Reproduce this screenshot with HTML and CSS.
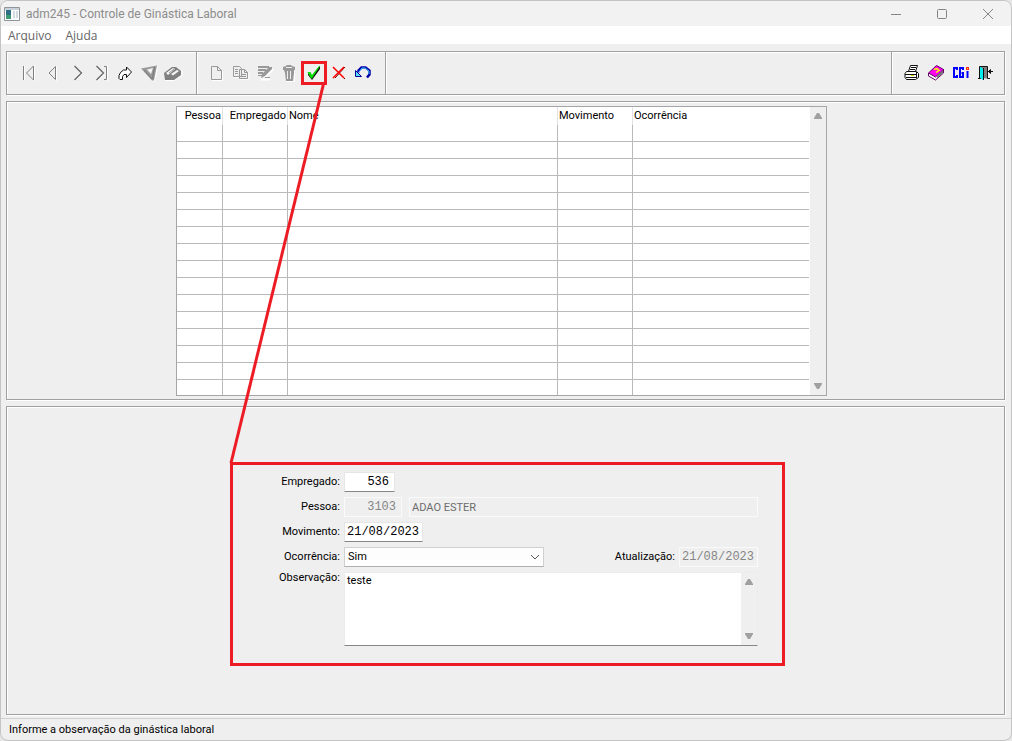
FILE: index.html
```html
<!DOCTYPE html>
<html lang="pt-BR">
<head>
<meta charset="utf-8">
<title>adm245 - Controle de Ginástica Laboral</title>
<link rel="stylesheet" href="styles.css">
</head>
<body>
<div class="window">
  <header class="titlebar">
    <svg class="app-icon" width="16" height="14" viewBox="0 0 16 14"><path d="M.5.5h15v13H.5z" fill="#fff" stroke="#8e959b"/><path d="M1 1h14v2H1z" fill="#c9d2da"/><path d="M2 3h5v9H2z" fill="#2f6f86"/><path d="M2 8h5v4H2z" fill="#3c9a70"/><path d="M9 4h2v7H9zM12 4h2v7h-2z" fill="#d5dbe0"/></svg>
    <h1 class="title">adm245 - Controle de Ginástica Laboral</h1>
    <div class="window-buttons">
      <button type="button" aria-label="Minimizar"><svg width="12" height="12"><path d="M1 6.5h10" stroke="#858585"/></svg></button>
      <button type="button" aria-label="Maximizar"><svg width="12" height="12"><rect x="1.5" y="1.5" width="9" height="9" rx="1" fill="none" stroke="#858585"/></svg></button>
      <button type="button" aria-label="Fechar"><svg width="12" height="12"><path d="M1 1l10 10M11 1L1 11" stroke="#858585"/></svg></button>
    </div>
  </header>
  <nav class="menu"><a href="#">Arquivo</a><a href="#">Ajuda</a></nav>

  <main class="content">
    <div class="toolbar">
      <div class="tools tools-nav">
        <button type="button" aria-label="Primeiro"><svg width="18" height="18"><path d="M4.5 16V2M14.500 1.500v15L7 9.500" stroke="#fff" fill="none"/><path d="M3.500 2v14M13.500 2v14M13.500 2L6.500 9l7 7" stroke="#808080" fill="none"/></svg></button>
        <button type="button" aria-label="Anterior"><svg width="18" height="18"><path d="M12.500 2v14.500L6 10.500" stroke="#fff" fill="none"/><path d="M11.500 2.500v13M11.500 2.500L5 9l6.500 6.500" stroke="#808080" fill="none"/></svg></button>
        <button type="button" aria-label="Próximo"><svg width="18" height="18"><path d="M6.500 17.500l8-8" stroke="#fff" fill="none"/><path d="M6.500 2l7 7-7 7" stroke="#666" stroke-width="1.300" fill="none"/></svg></button>
        <button type="button" aria-label="Último"><svg width="18" height="18"><path d="M5 17.500l8-8M15.500 2v15" stroke="#fff" fill="none"/><path d="M4.500 2l7 7-7 7" stroke="#666" stroke-width="1.300" fill="none"/><path d="M12 2.500h2.500v13H12" stroke="#808080" fill="none"/></svg></button>
        <button type="button" aria-label="Ir para"><svg width="18" height="18"><path d="M4 15.500H6.500V12.500L8 10.500h2.500V13.500L15.500 8 10.500 3v3H7.500L4.500 8.500 3 11.500v3z" fill="#fff" stroke="#111"/></svg></button>
        <button type="button" aria-label="Filtrar"><svg width="18" height="18"><path d="M3 6.500l15-4-3 15h-2z" fill="#fff"/><path d="M1 4.500l16-3-3 15h-2z" fill="#999"/><path d="M7 5.500l6-1.500-2 6z" fill="#f4f4f4"/><path d="M4 6l8 9M14.500 3l-2 12" stroke="#777" fill="none"/></svg></button>
        <button type="button" aria-label="Pesquisar"><svg width="20" height="18"><path d="M2 16.500h9l8-5V6" stroke="#fff" fill="none"/><path d="M1 9l8-6h4l5 4v4l-7 5H2z" fill="#808080"/><path d="M3 9l7-5 2 1-7 6zM8 10l6-4 2 1-6 4.500z" fill="#f5f5f5"/><path d="M6 9l5-4" stroke="#999"/></svg></button>
      </div>
      <div class="tools tools-edit">
        <button type="button" aria-label="Novo"><svg width="18" height="18"><path d="M4 16.500h10.500V6" stroke="#fff" fill="none"/><path d="M3.500 2.500h6l4 4v9h-10zM9.500 2.500v4h4" stroke="#999" fill="none"/></svg></button>
        <button type="button" aria-label="Copiar"><svg width="18" height="18"><path d="M2.500 13.500h5M8 15.500h9V8" stroke="#fff" fill="none"/><path d="M1.500 2.500h6l2 2v8h-8zM7.500 5.500h5l3 3v6h-8zM12.500 5.500v3h3M3 5.500h3M3 7.500h3M3 9.500h3M9 10.500h5M9 12.500h5" stroke="#999" fill="none"/></svg></button>
        <button type="button" aria-label="Editar"><svg width="18" height="18"><path d="M5 15.500h9M9 13l8-8" stroke="#fff" stroke-width="2" fill="none"/><path d="M2 2h11v2H2zM2 5h8v2H2zM2 8h5v2H2zM2 11h4v1H2zM9 13h5v1H9zM6 10l7-7h3v2l-7 7-4 2z" fill="#999"/></svg></button>
        <button type="button" aria-label="Excluir"><svg width="18" height="18"><path d="M6 17.500h8.500V7" stroke="#fff" fill="none"/><path d="M3 3l3-1 1-1h4l1 1 3 1v3H3zM4 6h10v3l-1 8H6L5 9z" fill="#999"/><path d="M6 3.500h6M7.500 7v8M10.500 7v8" stroke="#eee"/></svg></button>
        <button type="button" class="confirm" aria-label="Confirmar"><svg width="18" height="18"><path d="M3 9l4 3 8-10v3L7 16 3 11z" fill="#111"/><path d="M2.500 8h3L7 11l7-9h1L7 14.500H6z" fill="#0d0"/></svg></button>
        <button type="button" class="cancel" aria-label="Cancelar"><svg width="18" height="18"><path d="M4 4l11 11M15 3L5 14" stroke="#700"/><path d="M3 3l11 11M14 3L3 14" stroke="#f00" stroke-width="1.500"/></svg></button>
        <button type="button" aria-label="Desfazer"><svg width="18" height="18"><path d="M4.500 8.500V6.500l3-3h4l4 3v4l-2.500 3" stroke="#00a" stroke-width="2.500" fill="none"/><path d="M5 8l3-4h3l4 3v3" stroke="#4cf" fill="none"/><path d="M1.500 6.500v6h6z" fill="#5df" stroke="#009"/></svg></button>
      </div>
      <div class="tools-space"></div>
      <div class="tools tools-app">
        <button type="button" aria-label="Imprimir"><svg width="18" height="18"><path d="M5.500 7.500l2-6h7l-2 6M3.500 7.500h10l2 2v4l-3 2h-9l-1.500-2v-4z" fill="#fff" stroke="#111"/><path d="M8 3.500h5M7 5.500h5M2 10.500h11M3 13.500h10M13.500 8v6" stroke="#111"/><path d="M8 11h3v1H8z" fill="#dd0"/></svg></button>
        <button type="button" aria-label="Ajuda"><svg width="18" height="18"><path d="M1.500 9v3l7 4 8-7V5" fill="#fff" stroke="#606"/><path d="M1.500 9l8-7.500 7 4-8 7.500z" fill="#f0e" stroke="#606"/><path d="M7 5.500l3-1 2 2-3 2" stroke="#ff0" stroke-width="1.500" fill="none"/><path d="M12 10l4-4v3l-6 5v-3z" fill="#777"/></svg></button>
        <button type="button" class="cgi" aria-label="CGI"><svg width="18" height="18"><path d="M5 6V4H2v9h3v-2M11 6V4H8v9h3V9H9.500M15.500 7v7" fill="none" stroke="#00f" stroke-width="2"/><path d="M14 3h3v3h-3z" fill="#f22"/><path d="M15 4h1v1h-1z" fill="#ff0"/></svg></button>
        <button type="button" aria-label="Sair"><svg width="18" height="18"><path d="M1 14.500h3M2.500 14V2.500h8V14.500H13" fill="#808080" stroke="#111"/><path d="M3 3h1l2 2v11l-3-2z" fill="#0ee"/><path d="M6.500 4v12" stroke="#111"/><path d="M11 7.500h5M13.500 5.500l-2 2 2 2z" stroke="#111" fill="#111"/></svg></button>
      </div>
    </div>

    <section class="panel panel-grid">
      <div class="grid-box">
        <table class="grid">
          <colgroup><col class="c-pessoa"><col class="c-empregado"><col class="c-nome"><col class="c-movimento"><col class="c-ocorrencia"></colgroup>
          <thead><tr><th class="num">Pessoa</th><th class="num">Empregado</th><th>Nome</th><th>Movimento</th><th>Ocorrência</th></tr></thead>
          <tbody>
            <tr><td></td><td></td><td></td><td></td><td></td></tr>
            <tr><td></td><td></td><td></td><td></td><td></td></tr>
            <tr><td></td><td></td><td></td><td></td><td></td></tr>
            <tr><td></td><td></td><td></td><td></td><td></td></tr>
            <tr><td></td><td></td><td></td><td></td><td></td></tr>
            <tr><td></td><td></td><td></td><td></td><td></td></tr>
            <tr><td></td><td></td><td></td><td></td><td></td></tr>
            <tr><td></td><td></td><td></td><td></td><td></td></tr>
            <tr><td></td><td></td><td></td><td></td><td></td></tr>
            <tr><td></td><td></td><td></td><td></td><td></td></tr>
            <tr><td></td><td></td><td></td><td></td><td></td></tr>
            <tr><td></td><td></td><td></td><td></td><td></td></tr>
            <tr><td></td><td></td><td></td><td></td><td></td></tr>
            <tr><td></td><td></td><td></td><td></td><td></td></tr>
            <tr><td></td><td></td><td></td><td></td><td></td></tr>
            <tr><td></td><td></td><td></td><td></td><td></td></tr>
          </tbody>
        </table>
        <div class="scroll">
          <svg width="10" height="8"><path d="M4 1h2l3 5v1H1V6z" fill="#a0a0a0"/></svg>
          <svg width="10" height="8"><path d="M4 7h2l3-5V1H1v1z" fill="#a0a0a0"/></svg>
        </div>
      </div>
    </section>

    <section class="panel panel-form">
      <form class="form">
        <label for="empregado">Empregado:</label>
        <div class="line"><input id="empregado" class="field mono w-code" value="536"></div>
        <label for="pessoa">Pessoa:</label>
        <div class="line split"><input id="pessoa" class="field mono off w-person" value="3103" readonly><input class="field off grow" aria-label="Nome" value="ADAO ESTER" readonly></div>
        <label for="movimento">Movimento:</label>
        <div class="line"><input id="movimento" class="field mono w-date" value="21/08/2023"></div>
        <label for="ocorrencia">Ocorrência:</label>
        <div class="line between">
          <span class="pick"><select id="ocorrencia"><option>Sim</option><option>Não</option></select><svg class="chevron" width="10" height="6"><path d="M1 1l4 4 4-4" fill="none" stroke="#555"/></svg></span>
          <span class="update"><label for="atualizacao">Atualização:</label><input id="atualizacao" class="field mono off w-date" value="21/08/2023" readonly></span>
        </div>
        <label for="observacao" class="top">Observação:</label>
        <div class="memo">
          <textarea id="observacao">teste</textarea>
          <div class="scroll">
            <svg width="10" height="8"><path d="M4 1h2l3 5v1H1V6z" fill="#a0a0a0"/></svg>
            <svg width="10" height="8"><path d="M4 7h2l3-5V1H1v1z" fill="#a0a0a0"/></svg>
          </div>
        </div>
      </form>
    </section>
  </main>
  <footer class="status">Informe a observação da ginástica laboral</footer>
  <svg class="callout" width="340" height="480"><path d="M323.500 84L231 463" stroke="#ed1c24" stroke-width="3" fill="none"/></svg>
</div>
</body>
</html>
```
FILE: styles.css
```css
* { box-sizing: border-box; }
body {
  margin: 0;
  background: #e6e6e6;
  color: #000;
  font: 11px/16px Roboto, "Liberation Sans", sans-serif;
}
button { padding: 0; border: 0; background: none; }
svg { display: block; }
input, select, textarea { margin: 0; font: inherit; color: inherit; outline: 0; }

.window {
  position: relative;
  display: flex;
  flex-direction: column;
  min-height: 100vh;
  overflow: hidden;
  border: 1px solid #c4c4c4;
  border-radius: 8px;
  background: #efefef;
}
.titlebar {
  display: flex;
  align-items: center;
  height: 25px;
  padding-left: 3px;
  background: #f2f2f2;
}
.title {
  flex: 1;
  margin: 0 0 0 6px;
  color: #8c8c8c;
  font: 12px/16px Roboto, sans-serif;
}
.window-buttons { display: flex; }
.window-buttons button { display: grid; place-items: center; width: 46px; height: 24px; }
.menu {
  display: flex;
  gap: 14px;
  height: 18px;
  padding-left: 7px;
  background: #fff;
  font: 12px/20px "Open Sans", sans-serif;
}
.menu a { color: #666; text-decoration: none; }

.content {
  flex: 1;
  display: flex;
  flex-direction: column;
  gap: 6px;
  padding: 7px 6px 3px 5px;
}
.toolbar, .panel {
  border: 1px solid #a0a0a0;
  box-shadow: 1px 1px 0 #fff, inset 1px 1px 0 #fff;
}
.toolbar { display: flex; height: 44px; }
.tools { display: flex; align-items: center; }
.tools button { display: grid; place-items: center; width: 24px; height: 24px; }
.tools-nav { padding: 0 11px 0 10px; }
.tools-edit { padding: 0 10px 0 8px; }
.tools-app { padding: 0 6px 0 8px; }
.tools-edit, .tools-space, .tools-app { border-left: 1px solid #a0a0a0; box-shadow: inset 1px 1px 0 #fff; }
.tools-space { flex: 1; }
.tools .confirm { width: 26px; border: 3px solid #ed1c24; }
.tools-app .cgi { width: 26px; }

.panel-grid { padding: 4px 0 3px 169px; }
.grid-box { display: flex; width: 651px; border: 1px solid #a6a6aa; background: #fff; }
.grid { width: 632px; border-collapse: separate; border-spacing: 0; table-layout: fixed; }
.c-pessoa { width: 46px; }
.c-empregado { width: 65px; }
.c-nome { width: 270px; }
.c-movimento { width: 75px; }
.grid th {
  height: 18px;
  padding: 0 1px;
  border-right: 1px solid #e2e2e2;
  font-weight: 400;
  text-align: left;
  line-height: 18px;
}
.grid th.num { text-align: right; }
.grid td { height: 17px; padding: 0; border: solid #b9b9b9; border-width: 0 1px 1px 0; }
.grid th:last-child, .grid td:last-child { border-right: 0; }
.grid tr:last-child td { height: 15px; border-bottom: 0; }
.scroll {
  display: flex;
  flex-direction: column;
  align-items: center;
  justify-content: space-between;
  width: 16px;
  margin-left: auto;
  padding: 5px 0;
  background: #efefef;
}

.panel-form { flex: 1; padding: 55px 0 48px 223px; }
.form {
  display: grid;
  grid-template-columns: 107px 414px;
  grid-auto-rows: minmax(20px, auto);
  gap: 5px 4px;
  width: 555px;
  padding: 7px 0 17px;
  border: 3px solid #ed1c24;
}
.form label { text-align: right; line-height: 20px; white-space: nowrap; }
.form label.top { line-height: 12px; }
.line { display: flex; }
.between { justify-content: space-between; }
.split { gap: 7px; }
.field {
  height: 20px;
  padding: 0 2px;
  border: 1px solid #e6e6e6;
  border-bottom-color: #868686;
  background: #fff;
}
.mono { font: 12px/16px "Liberation Mono", monospace; }
.off { border-color: #fafafa; background: #efefef; color: #858585; }
.w-code { width: 51px; padding-right: 5px; text-align: right; }
.w-person { width: 58px; padding-right: 5px; text-align: right; }
.w-date { width: 79px; }
.grow { flex: 1; color: #6d6d6d; }
.pick { position: relative; }
.pick select {
  display: block;
  width: 200px;
  height: 20px;
  padding: 0 3px;
  border: 1px solid #d0d0d0;
  border-bottom-color: #b0b0b0;
  background: #fdfdfd;
  appearance: none;
}
.chevron { position: absolute; top: 7px; right: 4px; pointer-events: none; }
.update { display: flex; gap: 4px; }
.memo {
  display: flex;
  height: 74px;
  border: 1px solid #ececec;
  border-bottom-color: #868686;
  background: #fff;
}
.memo textarea { flex: 1; padding: 0 2px; border: 0; background: #fff; resize: none; overflow: hidden; }

.status {
  height: 22px;
  padding-left: 8px;
  border-top: 1px solid #d2d2d2;
  line-height: 21px;
}
.callout { position: absolute; top: -1px; left: -1px; pointer-events: none; }
```
